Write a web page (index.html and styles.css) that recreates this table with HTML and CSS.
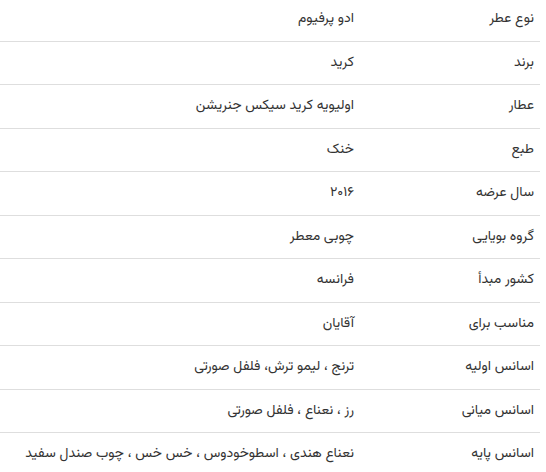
FILE: index.html
```html
<!DOCTYPE html>
<html lang="fa" dir="rtl">
<head>
<meta charset="utf-8">
<link rel="stylesheet" href="styles.css">
</head>
<body>
<div class="wrap">
<table class="specs">
<tbody>
<tr><th>نوع عطر</th><td>ادو پرفیوم</td></tr>
<tr><th>برند</th><td>کرید</td></tr>
<tr><th>عطار</th><td>اولیویه کرید سیکس جنریشن</td></tr>
<tr><th>طبع</th><td>خنک</td></tr>
<tr><th>سال عرضه</th><td>۲۰۱۶</td></tr>
<tr><th>گروه بویایی</th><td>چوبی معطر</td></tr>
<tr><th>کشور مبدأ</th><td>فرانسه</td></tr>
<tr><th>مناسب برای</th><td>آقایان</td></tr>
<tr><th>اسانس اولیه</th><td>ترنج ، لیمو ترش، فلفل صورتی</td></tr>
<tr><th>اسانس میانی</th><td>رز ، نعناع ، فلفل صورتی</td></tr>
<tr><th>اسانس پایه</th><td>نعناع هندی ، اسطوخودوس ، خس خس ، چوب صندل سفید</td></tr>
</tbody>
</table>
</div>
</body>
</html>
```
FILE: styles.css
```css
html, body {
  margin: 0;
  padding: 0;
  background: #fff;
}
.wrap {
  padding-right: 6px;
  margin-top: -3px;
  overflow: hidden;
}
.specs {
  width: 100%;
  border-collapse: collapse;
  font-family: "Vazirmatn", "DejaVu Sans", sans-serif;
  font-size: 14px;
  color: #333;
}
.specs th,
.specs td {
  border-top: 1px solid #dedede;
  padding: 11px 6px 11px 6px;
  line-height: 20.5px;
  text-align: right;
  font-weight: normal;
  vertical-align: middle;
}
.specs th {
  width: 173px;
  padding-left: 1px;
}
```
